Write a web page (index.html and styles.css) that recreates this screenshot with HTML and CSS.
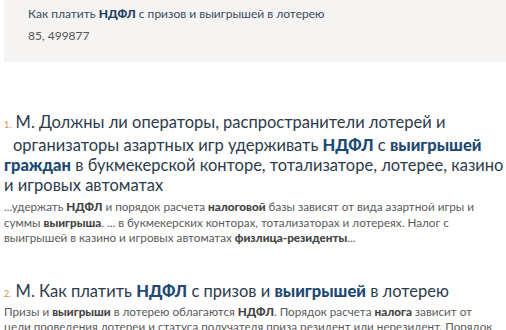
FILE: index.html
```html
<!DOCTYPE html>
<html lang="ru">
<head>
<meta charset="utf-8">
<link rel="stylesheet" href="styles.css">
</head>
<body>
<div class="related">
  <div class="related-title">Как платить <b>НДФЛ</b> с призов и выигрышей в лотерею</div>
  <div class="related-meta">85, 499877</div>
</div>
<div class="results">
  <div class="result">
    <div class="result-title"><span class="num">1.</span> М. Должны ли операторы, распространители лотерей и<br><span class="ind">организаторы</span> азартных игр удерживать <b>НДФЛ</b> с <b>выигрышей</b><br><b>граждан</b> в букмекерской конторе, тотализаторе, лотерее, казино<br>и игровых автоматах</div>
    <div class="result-text">...удержать <b>НДФЛ</b> и порядок расчета <b>налоговой</b> базы зависят от вида азартной игры и<br>суммы <b>выигрыша</b>. ... в букмекерских конторах, тотализаторах и лотереях. Налог с<br>выигрышей в казино и игровых автоматах <b>физлица-резиденты</b>...</div>
  </div>
  <div class="result second">
    <div class="result-title"><span class="num">2.</span> М. Как платить <b>НДФЛ</b> с призов и <b>выигрышей</b> в лотерею</div>
    <div class="result-text">Призы и <b>выигрыши</b> в лотерею облагаются <b>НДФЛ</b>. Порядок расчета <b>налога</b> зависит от<br>цели проведения лотереи и статуса получателя приза резидент или нерезидент. Порядок</div>
  </div>
</div>
</body>
</html>
```
FILE: styles.css
```css
html, body {
  margin: 0;
  padding: 0;
  background: #fff;
  font-family: "Lato", "Open Sans", sans-serif;
  overflow: hidden;
}
.related {
  margin-left: 4px;
  background: #f5f4f3;
  height: 62px;
  box-sizing: border-box;
  padding: 6px 0 0 24px;
  font-size: 12px;
  color: #3a4a5c;
}
.related-title {
  line-height: 16px;
}
.related-title b {
  color: #1f3f5f;
  font-weight: 900;
}
.related-meta {
  margin-top: 6px;
  line-height: 16px;
  color: #555;
}
.results {
  padding: 50px 0 0 4px;
}
.result {
  margin-bottom: 35px;
}
.result-title {
  font-size: 16.5px;
  line-height: 20px;
  color: #2d3b4b;
  white-space: nowrap;
}
.result-title b {
  color: #1d4a72;
  font-weight: 900;
}
.num {
  font-size: 9px;
  color: #d98a4e;
}
.ind {
  margin-left: 9px;
}
.result-text {
  margin-top: 4px;
  font-size: 11.7px;
  line-height: 15.5px;
  color: #5a5a5a;
  white-space: nowrap;
}
.second .result-text {
  margin-top: 0;
}
.result-text b {
  color: #444;
  font-weight: 900;
}
```
